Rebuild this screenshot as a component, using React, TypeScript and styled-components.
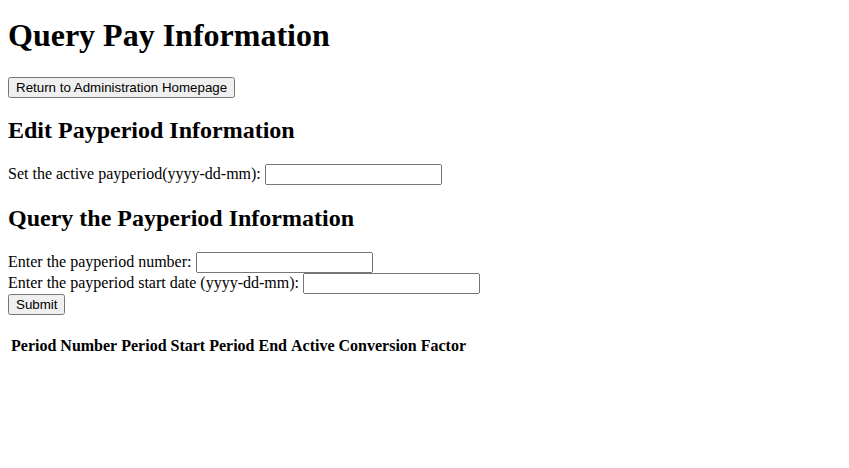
import styled, { createGlobalStyle } from "styled-components";

const GlobalStyle = createGlobalStyle`
  body {
    margin: 8px;
    font-family: "Liberation Serif", "Times New Roman", serif;
    font-size: 16px;
    color: #000;
    background: #fff;
  }
`;

const Title = styled.h1`
  font-size: 32px;
  font-weight: bold;
  margin: 9px 0 22.5px;
`;

const SectionTitle = styled.h2`
  font-size: 24px;
  font-weight: bold;
  margin: 19.92px 0;
`;

const Button = styled.button`
  font-family: "Liberation Sans", Arial, sans-serif;
  font-size: 13.333px;
  color: #000;
`;

const Input = styled.input`
  box-sizing: border-box;
  width: 177px;
  font-family: "Liberation Sans", Arial, sans-serif;
  font-size: 13.333px;
`;

const Form = styled.form`
  margin: 0;
`;

const Table = styled.table`
  border-spacing: 2px;
  margin-top: 19px;
`;

const HeadCell = styled.th`
  padding: 1px;
  font-weight: bold;
  text-align: center;
`;

const columns = [
  "Period Number",
  "Period Start",
  "Period End",
  "Active",
  "Conversion Factor",
];

export default function App() {
  return (
    <>
      <GlobalStyle />
      <Title>Query Pay Information</Title>
      <Button type="button">Return to Administration Homepage</Button>
      <SectionTitle>Edit Payperiod Information</SectionTitle>
      <Form onSubmit={(e) => e.preventDefault()}>
        Set the active payperiod(yyyy-dd-mm): <Input type="text" />
      </Form>
      <SectionTitle>Query the Payperiod Information</SectionTitle>
      <Form onSubmit={(e) => e.preventDefault()}>
        Enter the payperiod number: <Input type="text" />
        <br />
        Enter the payperiod start date (yyyy-dd-mm): <Input type="text" />
        <br />
        <Button type="submit">Submit</Button>
      </Form>
      <Table>
        <thead>
          <tr>
            {columns.map((c) => (
              <HeadCell key={c}>{c}</HeadCell>
            ))}
          </tr>
        </thead>
      </Table>
    </>
  );
}
